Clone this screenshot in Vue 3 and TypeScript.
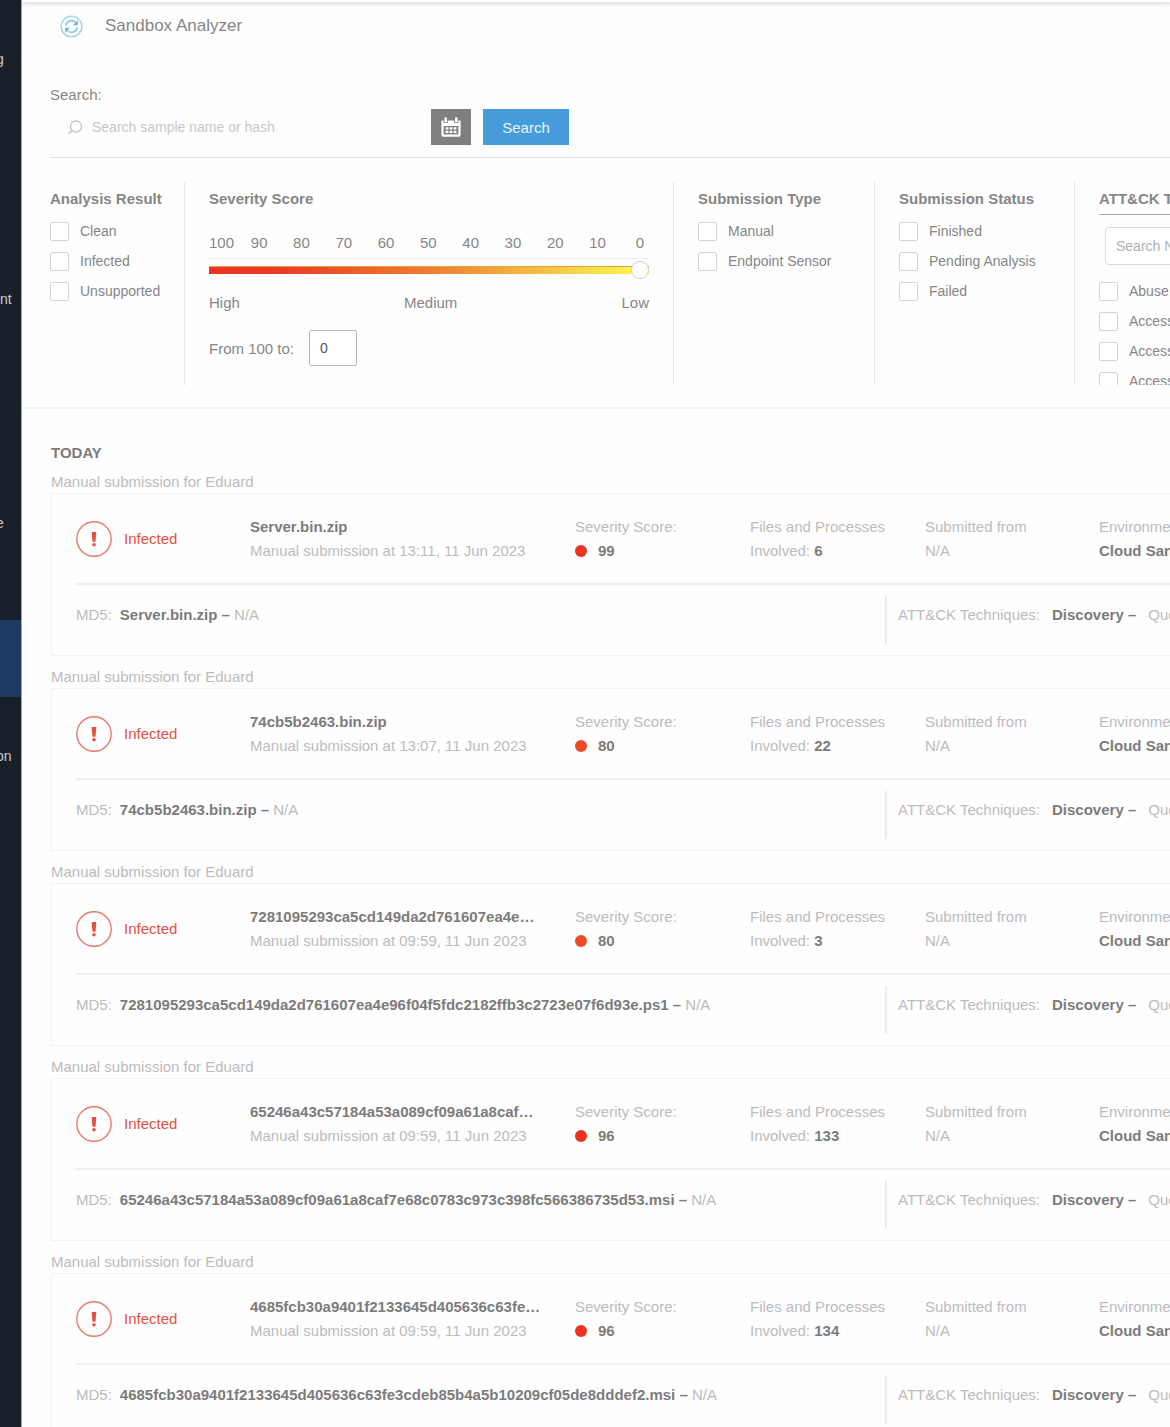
<script setup lang="ts">
import { ref } from 'vue'

interface NavItem {
  label: string
  size: string
  active?: boolean
}

interface Submission {
  name: string
  hash: string
  time: string
  score: number
  files: number
}

const navItems: NavItem[] = [
  { label: 'g', size: 'tall' },
  { label: 'nt', size: 'group' },
  { label: 'e', size: 'short' },
  { label: '', size: 'gap' },
  { label: '', size: 'current', active: true },
  { label: 'on', size: 'tall' },
]

const results = ['Clean', 'Infected', 'Unsupported']
const types = ['Manual', 'Endpoint Sensor']
const statuses = ['Finished', 'Pending Analysis', 'Failed']
const techniques = ['Abuse', 'Access', 'Access', 'Access']
const ticks = [100, 90, 80, 70, 60, 50, 40, 30, 20, 10, 0]

const query = ref('')
const techniqueQuery = ref('')
const score = ref(0)

const submissions: Submission[] = [
  { name: 'Server.bin.zip', hash: 'Server.bin.zip', time: '13:11', score: 99, files: 6 },
  { name: '74cb5b2463.bin.zip', hash: '74cb5b2463.bin.zip', time: '13:07', score: 80, files: 22 },
  {
    name: '7281095293ca5cd149da2d761607ea4e…',
    hash: '7281095293ca5cd149da2d761607ea4e96f04f5fdc2182ffb3c2723e07f6d93e.ps1',
    time: '09:59',
    score: 80,
    files: 3,
  },
  {
    name: '65246a43c57184a53a089cf09a61a8caf…',
    hash: '65246a43c57184a53a089cf09a61a8caf7e68c0783c973c398fc566386735d53.msi',
    time: '09:59',
    score: 96,
    files: 133,
  },
  {
    name: '4685fcb30a9401f2133645d405636c63fe…',
    hash: '4685fcb30a9401f2133645d405636c63fe3cdeb85b4a5b10209cf05de8dddef2.msi',
    time: '09:59',
    score: 96,
    files: 134,
  },
]
</script>

<template>
  <div class="app">
    <nav class="sidebar" aria-label="Main">
      <a
        v-for="(item, i) in navItems"
        :key="i"
        href="#"
        class="nav-item"
        :class="[item.size, { active: item.active }]"
        >{{ item.label }}</a
      >
    </nav>

    <main class="main">
      <div class="topbar"></div>

      <header class="title-row">
        <svg class="refresh" viewBox="0 0 24 24" fill="none" stroke="#8cc4e0">
          <circle cx="12" cy="12" r="10.800" stroke="#a5d2e8" stroke-width="1.500" />
          <path d="M6 11.200a6.100 6.100 0 0 1 10.400-3.400M18 12.800a6.100 6.100 0 0 1-10.400 3.400" stroke-width="1.700" />
          <path d="M18.600 5.600v5h-5zM5.400 18.400v-5h5z" fill="#6fb3d8" stroke="none" />
        </svg>
        <h1>Sandbox Analyzer</h1>
      </header>

      <section class="search">
        <label for="query">Search:</label>
        <div class="search-row">
          <div class="query">
            <svg viewBox="0 0 16 16" fill="none" stroke="#c2c2c2" stroke-width="1.300">
              <circle cx="9" cy="7.600" r="5.600" />
              <path d="M5 11.600l-3.600 3.200" stroke-width="1.600" />
            </svg>
            <input id="query" v-model="query" type="text" placeholder="Search sample name or hash" />
          </div>
          <button class="calendar" type="button" aria-label="Pick dates">
            <svg viewBox="0 0 20 20">
              <path d="M.4 3.500h2.200v2.500h4.200V3.500h6.400V6h4.200V3.500h2.200V18a1.800 1.800 0 0 1-1.800 1.800H2.200A1.800 1.800 0 0 1 .4 18z" fill="#fff" />
              <rect x="3.400" y="0.200" width="2.600" height="5.200" rx="1.200" fill="#fff" />
              <rect x="14" y="0.200" width="2.600" height="5.200" rx="1.200" fill="#fff" />
              <rect x="2.600" y="9" width="14.800" height="8.400" fill="#7f7f7f" />
              <path
                d="M4.600 10.200h2.800v2.300H4.600zM8.600 10.200h2.800v2.300H8.600zM12.600 10.200h2.800v2.300h-2.800zM4.600 13.800h2.800v2.300H4.600zM8.600 13.800h2.800v2.300H8.600zM12.600 13.800h2.800v2.300h-2.800z"
                fill="#fff"
              />
            </svg>
          </button>
          <button class="go" type="button">Search</button>
        </div>
      </section>

      <section class="filters">
        <div class="filter">
          <h2>Analysis Result</h2>
          <label v-for="r in results" :key="r" class="check"><input type="checkbox" />{{ r }}</label>
        </div>

        <div class="filter severity">
          <h2>Severity Score</h2>
          <div class="ticks">
            <span v-for="t in ticks" :key="t">{{ t }}</span>
          </div>
          <div class="slider">
            <input v-model.number="score" type="range" min="0" max="100" aria-label="Severity score" />
          </div>
          <div class="levels"><span>High</span><span>Medium</span><span>Low</span></div>
          <div class="from">
            <label for="score">From 100 to:</label>
            <input id="score" v-model.number="score" type="text" />
          </div>
        </div>

        <div class="filter">
          <h2>Submission Type</h2>
          <label v-for="t in types" :key="t" class="check"><input type="checkbox" />{{ t }}</label>
        </div>

        <div class="filter">
          <h2>Submission Status</h2>
          <label v-for="s in statuses" :key="s" class="check"><input type="checkbox" />{{ s }}</label>
        </div>

        <div class="filter attack">
          <h2>ATT&amp;CK Techniques</h2>
          <input v-model="techniqueQuery" class="find" type="text" placeholder="Search Name" aria-label="Technique" />
          <label v-for="(t, i) in techniques" :key="i" class="check"><input type="checkbox" />{{ t }}</label>
        </div>
      </section>

      <section class="results">
        <h2>TODAY</h2>
        <template v-for="s in submissions" :key="s.hash">
          <p class="group">Manual submission for Eduard</p>
          <article class="card">
            <div class="summary">
              <div class="verdict">
                <svg viewBox="0 0 36 36">
                  <circle cx="18" cy="18" r="17.200" fill="none" stroke="#ea7a6c" stroke-width="1.400" />
                  <path d="M15.700 11h4.600l-.8 9.800h-3z" fill="#e4513f" />
                  <circle cx="18" cy="23.800" r="1.800" fill="#e4513f" />
                </svg>
                <span>Infected</span>
              </div>
              <div>
                <strong>{{ s.name }}</strong
                ><br />Manual submission at {{ s.time }}, 11 Jun 2023
              </div>
              <div>
                Severity Score:
                <div class="score">
                  <i class="dot" :class="{ medium: s.score < 90 }"></i><strong>{{ s.score }}</strong>
                </div>
              </div>
              <div>Files and Processes<br />Involved: <strong>{{ s.files }}</strong></div>
              <div>Submitted from<br />N/A</div>
              <div>Environment<br /><strong>Cloud Sandbox</strong></div>
            </div>
            <div class="details">
              <div class="md5">
                <span>MD5:</span>
                <div><strong>{{ s.hash }} –</strong> N/A</div>
              </div>
              <div class="tech">
                <span>ATT&amp;CK Techniques:</span><strong>Discovery –</strong><span>Query</span>
              </div>
            </div>
          </article>
        </template>
      </section>
    </main>
  </div>
</template>

<style>
body {
  overflow-x: hidden;
  background: #fefefe;
}
</style>

<style scoped>
* {
  box-sizing: border-box;
}

.app {
  display: flex;
  min-height: 100vh;
  font-family: 'Liberation Sans', Arial, sans-serif;
  font-size: 15px;
  color: #868686;
}

h1,
h2,
p {
  margin: 0;
}

input,
button {
  font-family: inherit;
}

.sidebar {
  flex: 0 0 22px;
  overflow: hidden;
  background: #181f28;
  border-right: 1px solid #a0a4a8;
}

.nav-item {
  display: flex;
  align-items: center;
  height: 118px;
  text-indent: -4px;
  font-size: 14px;
  color: #c9ccd0;
  text-decoration: none;
}

.nav-item.group {
  height: 362px;
  padding-bottom: 10px;
  text-indent: 0;
}

.nav-item.short {
  height: 86px;
}

.nav-item.gap {
  height: 54px;
}

.nav-item.current {
  height: 77px;
}

.nav-item.active {
  background: #1f3a60;
}

.main {
  flex: 1;
  min-width: 0;
  overflow: hidden;
}

.topbar {
  height: 2px;
  background: #fff;
  box-shadow: 0 1px 4px 1px #d4d4d4;
}

.title-row {
  display: flex;
  align-items: center;
  gap: 22px;
  height: 48px;
  padding-left: 38px;
}

.refresh {
  width: 23px;
  height: 23px;
}

h1 {
  font-size: 17px;
  font-weight: 400;
}

.search {
  margin-left: 28px;
  padding: 35px 0 12px;
  border-bottom: 1px solid #e2e2e2;
}

.search label {
  display: block;
  line-height: 20px;
}

.search-row {
  display: flex;
  margin-top: 4px;
}

.query {
  display: flex;
  align-items: center;
  gap: 9px;
  width: 369px;
  margin-right: 12px;
  padding-left: 17px;
}

.query svg {
  width: 16px;
  height: 16px;
}

.query input {
  flex: 1;
  padding: 0;
  border: 0;
  outline: 0;
  background: none;
  font-size: 14px;
}

input::placeholder {
  color: #c8c8c8;
}

.calendar {
  display: grid;
  place-items: center;
  width: 40px;
  height: 36px;
  padding: 0;
  border: 0;
  background: #7f7f7f;
}

.calendar svg {
  width: 20px;
  height: 20px;
}

.go {
  width: 86px;
  height: 36px;
  margin-left: 12px;
  padding: 0;
  border: 0;
  background: #469cdb;
  font-size: 15px;
  color: #eaf5fd;
}

.filters {
  display: grid;
  grid-template-columns: 135px minmax(0, 1fr) 201px 200px 95px;
  padding: 24px 0 22px 28px;
  border-bottom: 2px solid #f3f3f3;
}

.filter {
  height: 203px;
  padding-left: 24px;
  border-right: 1px solid #e4e4e4;
  white-space: nowrap;
}

.filter:first-child {
  padding-left: 0;
}

.filter h2 {
  font-size: 15px;
  line-height: 34px;
}

.check {
  display: flex;
  align-items: center;
  gap: 11px;
  height: 30px;
  font-size: 14px;
}

.check input {
  appearance: none;
  flex: none;
  width: 19px;
  height: 19px;
  margin: 0;
  border: 1px solid #d3d3d3;
  border-radius: 2px;
  background: #fff;
}

.severity {
  padding-right: 24px;
}

.ticks {
  display: grid;
  grid-template-columns: 29px repeat(10, 1fr);
  margin: 16px -12px 5px 0;
  line-height: 21px;
  text-align: center;
}

.ticks span:first-child {
  text-align: left;
}

.slider {
  border-top: 1px solid #eee;
}

.slider input {
  appearance: none;
  display: block;
  direction: rtl;
  width: 100%;
  height: 22px;
  margin: 0;
  background: none;
}

.slider input::-webkit-slider-runnable-track {
  height: 8px;
  border-top: 1px solid #eaa040;
  background: linear-gradient(90deg, #eb3323 0%, #eb3a24 15%, #ee7d31 50%, #fcf950 98%);
}

.slider input::-webkit-slider-thumb {
  appearance: none;
  width: 18px;
  height: 18px;
  margin-top: -6px;
  border: 1px solid #cfcfcf;
  border-radius: 50%;
  background: #fff;
}

.levels {
  display: flex;
  justify-content: space-between;
  margin-top: 12px;
  line-height: 20px;
}

.from {
  display: flex;
  align-items: center;
  gap: 15px;
  margin-top: 17px;
}

.from input {
  width: 48px;
  height: 36px;
  padding: 0 10px;
  border: 1px solid #b9b9b9;
  border-radius: 2px;
  background: #fff;
  font-size: 14px;
  color: #555;
}

.attack {
  overflow: hidden;
  border-right: 0;
}

.attack h2 {
  width: 160px;
  height: 33px;
  border-bottom: 1px solid #a8a8a8;
}

.find {
  display: block;
  width: 160px;
  height: 38px;
  margin: 12px 0 11px 6px;
  padding: 0 10px;
  border: 1px solid #ddd;
  border-radius: 4px;
  background: #fff;
  font-size: 14px;
}

.find::placeholder {
  color: #b0b0b0;
}

.results {
  padding: 36px 0 24px 29px;
  color: #bcbcbc;
}

.results h2 {
  font-size: 15px;
  line-height: 16px;
  color: #7c7c7c;
}

.group {
  padding-top: 10px;
  line-height: 22px;
}

.card {
  padding-left: 24px;
  border: 1px solid #f2f2f2;
  border-right: 0;
  white-space: nowrap;
}

.card strong {
  color: #7c7c7c;
}

.summary {
  display: grid;
  grid-template-columns:
    minmax(0, 174fr) minmax(0, 325fr) minmax(0, 175fr) minmax(0, 175fr) minmax(0, 174fr)
    minmax(0, 71fr);
  padding: 21px 0 20px;
  border-bottom: 2px solid #f0f0f0;
  line-height: 24px;
}

.verdict {
  display: flex;
  align-items: center;
  gap: 12px;
  color: #e4513f;
}

.verdict svg {
  width: 36px;
  height: 36px;
}

.score {
  display: flex;
  align-items: center;
  gap: 11px;
}

.dot {
  width: 12px;
  height: 12px;
  border-radius: 50%;
  background: #ea3323;
}

.dot.medium {
  background: #ec4b25;
}

.details {
  display: grid;
  grid-template-columns: minmax(0, 809fr) minmax(0, 285fr);
  padding: 11px 0;
  line-height: 24px;
}

.md5,
.tech {
  display: flex;
  gap: 8px;
  height: 48px;
  padding-top: 7px;
}

.tech {
  gap: 12px;
  padding-left: 11px;
  border-left: 2px solid #ececec;
}
</style>
